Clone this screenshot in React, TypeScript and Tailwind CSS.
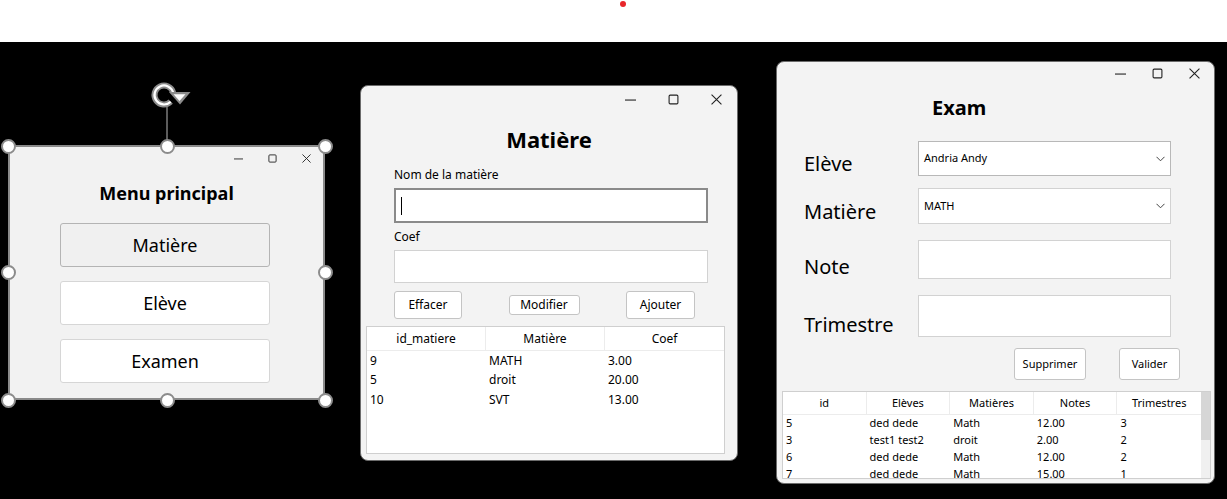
import React from "react";

function Caption({ size = 10 }: { size?: number }) {
  return (
    <>
      <svg width={size} height={size} viewBox="0 0 10 10" className="shrink-0">
        <line x1="0" y1="5.5" x2="10" y2="5.5" stroke="#222" strokeWidth="1" />
      </svg>
      <svg width={size} height={size} viewBox="0 0 10 10" className="shrink-0">
        <rect x="1" y="1" width="8" height="8" rx="1" fill="none" stroke="#222" strokeWidth="1" />
      </svg>
      <svg width={size} height={size} viewBox="0 0 10 10" className="shrink-0">
        <path d="M0.5 0.5 L9.5 9.5 M9.5 0.5 L0.5 9.5" stroke="#222" strokeWidth="1" />
      </svg>
    </>
  );
}

function Chevron() {
  return (
    <svg width="9" height="6" viewBox="0 0 9 6">
      <path d="M0.5 0.8 L4.5 4.8 L8.5 0.8" fill="none" stroke="#444" strokeWidth="1" />
    </svg>
  );
}

function Handle({ x, y }: { x: number; y: number }) {
  return (
    <div
      className="absolute w-[15px] h-[15px] rounded-full bg-white border-[2.5px] border-[#8c8c8c]"
      style={{ left: x - 7.5, top: y - 7.5 }}
    />
  );
}

function RotateHandle() {
  // arc from 45deg around clockwise to -15deg, head pointing down at the right
  const cx = 164;
  const cy = 95;
  const r = 9.5;
  const a0 = (45 * Math.PI) / 180;
  const a1 = (-15 * Math.PI) / 180;
  const d = `M ${cx + r * Math.cos(a0)} ${cy + r * Math.sin(a0)} A ${r} ${r} 0 1 1 ${cx + r * Math.cos(a1)} ${cy + r * Math.sin(a1)}`;
  return (
    <svg className="absolute left-0 top-0" width="200" height="150" viewBox="0 0 200 150">
      <line x1="167" y1="106" x2="167" y2="140" stroke="#9a9a9a" strokeWidth="1.2" />
      <path d={d} fill="none" stroke="#8c8c8c" strokeWidth="6" />
      <path d={d} fill="none" stroke="#ffffff" strokeWidth="2.2" />
      <path d="M169 92 L190.5 92 L180 104.5 Z" fill="#8c8c8c" />
      <path d="M173.5 94.2 L185.5 94.2 L179.5 101 Z" fill="#ffffff" />
    </svg>
  );
}

const matieres = [
  ["9", "MATH", "3.00"],
  ["5", "droit", "20.00"],
  ["10", "SVT", "13.00"],
];

const exams = [
  ["5", "ded dede", "Math", "12.00", "3"],
  ["3", "test1 test2", "droit", "2.00", "2"],
  ["6", "ded dede", "Math", "12.00", "2"],
  ["7", "ded dede", "Math", "15.00", "1"],
];

function MenuWindow() {
  return (
    <div className="absolute left-[8px] top-[145px] w-[317px] h-[255px] bg-[#f2f2f2] border-2 border-[#8a8a8a] flex flex-col">
      <div className="h-[23px] flex items-center justify-end gap-[25px] pr-[12px]">
        <Caption size={9} />
      </div>
      <h1 className="mt-[10px] text-center text-[18px] leading-[26px] font-bold text-black">Menu principal</h1>
      <div className="mt-[17px] ml-[50px] flex flex-col items-start gap-[14px]">
        <button className="w-[210px] h-[44px] bg-[#f0f0f0] border border-[#b4b4b4] rounded-[3px] text-[18px] text-black">
          Matière
        </button>
        <button className="w-[210px] h-[44px] bg-white border border-[#d6d6d6] rounded-[3px] text-[18px] text-black">
          Elève
        </button>
        <button className="w-[210px] h-[44px] bg-white border border-[#d6d6d6] rounded-[3px] text-[18px] text-black">
          Examen
        </button>
      </div>
    </div>
  );
}

function MatiereWindow() {
  return (
    <div className="absolute left-[360px] top-[85px] w-[378px] h-[376px] bg-[#f3f3f3] rounded-[8px] border border-[#6b6b6b] flex flex-col">
      <div className="h-[27px] flex items-center justify-end gap-[32px] pr-[15px]">
        <Caption size={11} />
      </div>
      <h1 className="mt-[11px] text-center text-[22px] leading-[30px] font-bold text-black">Matière</h1>
      <div className="mt-[12px] pl-[33px] text-[12px] leading-[18px] text-black">Nom de la matière</div>
      <div className="mt-[4px] ml-[33px] w-[314px] h-[35px] bg-white border-2 border-[#8a8a8a] flex items-center pl-[5px]">
        <div className="w-px h-[18px] bg-black" />
      </div>
      <div className="mt-[5px] pl-[33px] text-[12px] leading-[18px] text-black">Coef</div>
      <div className="mt-[4px] ml-[33px] w-[314px] h-[33px] bg-white border border-[#d2d2d2]" />
      <div className="mt-[8px] ml-[33px] w-[301px] flex items-center justify-between text-[12px] text-black">
        <button className="w-[68px] h-[28px] bg-white border border-[#c4c4c4] rounded-[3px]">Effacer</button>
        <button className="w-[71px] h-[20px] bg-white border border-[#c4c4c4] rounded-[3px] leading-[18px]">
          Modifier
        </button>
        <button className="w-[69px] h-[28px] bg-white border border-[#c4c4c4] rounded-[3px]">Ajouter</button>
      </div>
      <div className="mt-[7px] ml-[5px] w-[359px] h-[128px] bg-white border border-[#cfcfcf] text-[12px] text-black">
        <div className="grid grid-cols-3 h-[24px] border-b border-[#ececec]">
          <div className="flex items-center justify-center border-r border-[#ececec]">id_matiere</div>
          <div className="flex items-center justify-center border-r border-[#ececec]">Matière</div>
          <div className="flex items-center justify-center">Coef</div>
        </div>
        {matieres.map((r) => (
          <div key={r[0]} className="grid grid-cols-3 h-[19.5px] items-center">
            {r.map((c, i) => (
              <div key={i} className="pl-[3px]">
                {c}
              </div>
            ))}
          </div>
        ))}
      </div>
    </div>
  );
}

function ExamWindow() {
  return (
    <div className="absolute left-[776px] top-[61px] w-[439px] h-[423px] bg-[#f3f3f3] rounded-[8px] border border-[#6b6b6b] flex flex-col">
      <div className="h-[23px] flex items-center justify-end gap-[26px] pr-[14px]">
        <Caption size={11} />
      </div>
      <h1 className="mt-[9px] pl-[155px] text-[20px] leading-[28px] font-bold text-black">Exam</h1>
      <div className="mt-[19px] flex flex-col text-black">
        <div className="flex items-end">
          <div className="w-[141px] pl-[27px] text-[20px] leading-[24px]">Elève</div>
          <div className="w-[253px] h-[35px] bg-white border border-[#b8b8b8] flex items-center justify-between px-[5px] text-[11px]">
            <span>Andria Andy</span>
            <Chevron />
          </div>
        </div>
        <div className="mt-[12px] flex items-end">
          <div className="w-[141px] pl-[27px] text-[20px] leading-[24px]">Matière</div>
          <div className="w-[253px] h-[36px] bg-white border border-[#d2d2d2] flex items-center justify-between px-[5px] text-[11px]">
            <span>MATH</span>
            <Chevron />
          </div>
        </div>
        <div className="mt-[16px] flex items-end">
          <div className="w-[141px] pl-[27px] text-[20px] leading-[24px]">Note</div>
          <div className="w-[253px] h-[39px] bg-white border border-[#d2d2d2]" />
        </div>
        <div className="mt-[16px] flex items-end">
          <div className="w-[141px] pl-[27px] text-[20px] leading-[24px]">Trimestre</div>
          <div className="w-[253px] h-[42px] bg-white border border-[#d2d2d2]" />
        </div>
      </div>
      <div className="mt-[11px] flex justify-end gap-[33px] pr-[34px] text-[11px] text-black">
        <button className="w-[72px] h-[32px] bg-white border border-[#c4c4c4] rounded-[3px]">Supprimer</button>
        <button className="w-[61px] h-[32px] bg-white border border-[#c4c4c4] rounded-[3px]">Valider</button>
      </div>
      <div className="mt-[11px] ml-[5px] w-[429px] h-[88px] bg-white border border-[#cfcfcf] flex text-[11px] text-black">
        <div className="flex-1 flex flex-col">
          <div className="grid grid-cols-5 h-[23px] shrink-0 border-b border-[#ececec]">
            {["id", "Elèves", "Matières", "Notes", "Trimestres"].map((h, i) => (
              <div key={h} className={`flex items-center justify-center ${i < 4 ? "border-r border-[#ececec]" : ""}`}>
                {h}
              </div>
            ))}
          </div>
          {exams.map((r, k) => (
            <div key={k} className="grid grid-cols-5 h-[17px] shrink-0 items-center">
              {r.map((c, i) => (
                <div key={i} className="pl-[3px]">
                  {c}
                </div>
              ))}
            </div>
          ))}
        </div>
        <div className="w-[9px] bg-[#f0f0f0] flex flex-col">
          <div className="h-[48px] bg-[#d6d6d6]" />
        </div>
      </div>
    </div>
  );
}

export default function App() {
  return (
    <div className="relative w-[1227px] h-[499px] overflow-hidden bg-black font-['Noto_Sans',sans-serif]">
      <div className="h-[42px] bg-white flex justify-center">
        <div className="mt-[1px] ml-[18px] w-[6px] h-[6px] rounded-full bg-[#e8262a]" />
      </div>
      <MenuWindow />
      <RotateHandle />
      <Handle x={8} y={146} />
      <Handle x={167} y={146} />
      <Handle x={325} y={146} />
      <Handle x={8} y={272} />
      <Handle x={325} y={272} />
      <Handle x={8} y={400} />
      <Handle x={167} y={400} />
      <Handle x={325} y={400} />
      <MatiereWindow />
      <ExamWindow />
    </div>
  );
}
